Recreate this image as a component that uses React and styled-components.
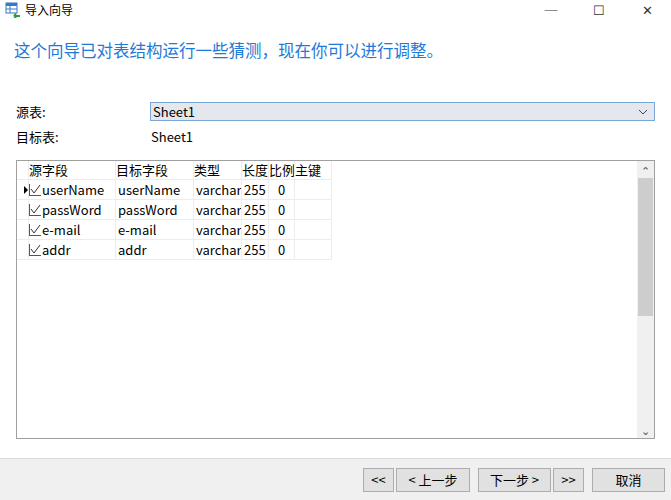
import React from "react";
import styled, { createGlobalStyle } from "styled-components";

const Global = createGlobalStyle`
  body { margin: 0; font-family: "Noto Sans CJK SC", "Noto Sans", sans-serif; font-size: 13px; color: #000; }
`;

const rows = [
  ["userName", "userName", "varchar", "255", "0"],
  ["passWord", "passWord", "varchar", "255", "0"],
  ["e-mail", "e-mail", "varchar", "255", "0"],
  ["addr", "addr", "varchar", "255", "0"],
];

const cols = "12px 87px 78px 48px 27px 26px 37px";

export default function App() {
  return (
    <Window>
      <Global />
      <TitleBar>
        <TitleLeft>
          <svg width="16" height="16" viewBox="0 0 16 16">
            <rect x="1" y="1" width="11" height="10" fill="#fff" stroke="#3a78c4" />
            <rect x="1" y="1" width="11" height="3" fill="#3a78c4" />
            <line x1="1" y1="7" x2="12" y2="7" stroke="#3a78c4" />
            <line x1="5" y1="1" x2="5" y2="11" stroke="#3a78c4" />
            <path d="M9 14 L15 14 M9 14 L11 11.5 M9 14 L11 16" stroke="#2e9a3a" strokeWidth="2" fill="none" />
          </svg>
          导入向导
        </TitleLeft>
        <Controls>
          <span>─</span>
          <span>☐</span>
          <span>✕</span>
        </Controls>
      </TitleBar>
      <Heading>这个向导已对表结构运行一些猜测，现在你可以进行调整。</Heading>
      <FormRow $top={41}>
        <Label>源表:</Label>
        <Combo>
          Sheet1
          <svg width="10" height="6" viewBox="0 0 10 6"><path d="M1 1 L5 5 L9 1" stroke="#444" fill="none" /></svg>
        </Combo>
      </FormRow>
      <FormRow $top={6}>
        <Label>目标表:</Label>
        <Value>Sheet1</Value>
      </FormRow>
      <GridBox>
        <GridArea>
          <Row $header>
            <Cell />
            <Cell>源字段</Cell>
            <Cell>目标字段</Cell>
            <Cell>类型</Cell>
            <Cell>长度</Cell>
            <Cell>比例</Cell>
            <Cell>主键</Cell>
          </Row>
          {rows.map((r, i) => (
            <Row key={r[0]}>
              <Cell>{i === 0 && <Arrow />}</Cell>
              <Cell>
                <Check>
                  <svg width="11" height="11" viewBox="0 0 11 11"><path d="M1 5 L4 9 L10 1" stroke="#333" fill="none" /></svg>
                </Check>
                {r[0]}
              </Cell>
              <Cell $pad>{r[1]}</Cell>
              <Cell $pad>{r[2]}</Cell>
              <Cell $pad>{r[3]}</Cell>
              <Cell $right>{r[4]}</Cell>
              <Cell />
            </Row>
          ))}
        </GridArea>
        <ScrollBar>
          <ScrollArrow>⌃</ScrollArrow>
          <Thumb />
          <Track />
          <ScrollArrow>⌄</ScrollArrow>
        </ScrollBar>
      </GridBox>
      <Footer>
        <Button $w={31}>&lt;&lt;</Button>
        <Button $w={74}>&lt; 上一步</Button>
        <Gap />
        <Button $w={73}>下一步 &gt;</Button>
        <Button $w={31}>&gt;&gt;</Button>
        <Gap />
        <Button $w={73}>取消</Button>
      </Footer>
    </Window>
  );
}

const Window = styled.div`
  width: 671px;
  height: 500px;
  background: #fff;
  display: flex;
  flex-direction: column;
  overflow: hidden;
`;

const TitleBar = styled.div`
  height: 19px;
  display: flex;
  justify-content: space-between;
  align-items: center;
`;

const TitleLeft = styled.div`
  display: flex;
  align-items: center;
  gap: 4px;
  padding-left: 5px;
  font-size: 12px;
`;

const Controls = styled.div`
  display: flex;
  font-size: 13px;
  color: #333;
  span { width: 48px; text-align: center; }
`;

const Heading = styled.div`
  margin: 20px 0 0 14px;
  color: #1e7ad6;
  font-size: 16.5px;
  line-height: 22px;
`;

const FormRow = styled.div`
  display: flex;
  align-items: center;
  margin: ${(p) => p.$top}px 16px 0 16px;
  height: 19px;
`;

const Label = styled.div`
  width: 134px;
`;

const Combo = styled.div`
  flex: 1;
  height: 19px;
  box-sizing: border-box;
  border: 1px solid #7aa7d6;
  background: #e4e8ee;
  display: flex;
  align-items: center;
  justify-content: space-between;
  padding: 0 6px 0 2px;
`;

const Value = styled.div`
  padding-left: 1px;
`;

const GridBox = styled.div`
  margin: 14px 16px 0 16px;
  height: 277px;
  border: 1px solid #a0a0a0;
  display: flex;
`;

const GridArea = styled.div`
  flex: 1;
  background: #fff;
`;

const Row = styled.div`
  display: grid;
  grid-template-columns: ${cols};
  height: 20px;
  width: max-content;
  border-bottom: 1px solid #ececec;
  box-sizing: border-box;
  ${(p) => p.$header && "height: 19px; background: #fff;"}
`;

const Cell = styled.div`
  display: flex;
  align-items: center;
  justify-content: ${(p) => (p.$right ? "center" : "flex-start")};
  border-right: 1px solid #ececec;
  padding-left: ${(p) => (p.$pad ? 2 : 0)}px;
  white-space: nowrap;
  overflow: hidden;
  line-height: 18px;
  &:nth-child(2) { padding-left: 0; }
`;

const Arrow = styled.span`
  margin-left: 7px;
  border-left: 4px solid #000;
  border-top: 4px solid transparent;
  border-bottom: 4px solid transparent;
`;

const Check = styled.span`
  width: 11px;
  height: 11px;
  border-left: 1px solid #555;
  border-bottom: 1px solid #555;
  margin-right: 1px;
  display: flex;
`;

const ScrollBar = styled.div`
  width: 17px;
  background: #f0f0f0;
  display: flex;
  flex-direction: column;
`;

const ScrollArrow = styled.div`
  height: 17px;
  display: flex;
  align-items: center;
  justify-content: center;
  font-size: 11px;
  color: #555;
`;

const Thumb = styled.div`
  height: 138px;
  margin: 0 1px;
  background: #cdcdcd;
`;

const Track = styled.div`
  flex: 1;
`;

const Footer = styled.div`
  margin-top: auto;
  height: 41px;
  background: #f0f0f0;
  border-top: 1px solid #dcdcdc;
  display: flex;
  justify-content: flex-end;
  align-items: center;
  gap: 2px;
  padding: 0 6px 0 0;
`;

const Button = styled.div`
  width: ${(p) => p.$w}px;
  height: 24px;
  box-sizing: border-box;
  border: 1px solid #adadad;
  background: #e1e1e1;
  display: flex;
  align-items: center;
  justify-content: center;
  font-size: 13px;
`;

const Gap = styled.div`
  width: 4px;
`;
